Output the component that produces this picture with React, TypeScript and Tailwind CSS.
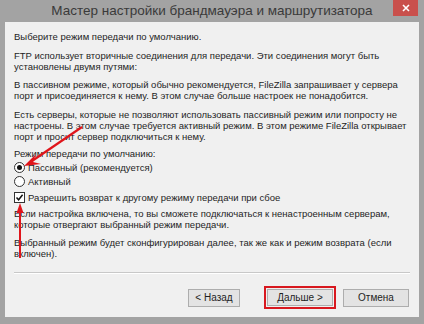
import React from 'react';

const font = { fontFamily: '"Liberation Sans", Arial, sans-serif' };

// абзац с ручными переносами строк, как в оригинале
function Para({ lines, className }: { lines: string[]; className?: string }) {
	return (
		<div className={className}>
			{lines.map((l, i) => (
				<div key={i} className="whitespace-nowrap h-[11px] leading-[11px]">{l}</div>
			))}
		</div>
	);
}

function Radio({ checked, label }: { checked?: boolean; label: string }) {
	return (
		<div className="flex items-center gap-[3px] h-[14px]">
			<span className="w-[11px] h-[11px] rounded-full border border-[#333] bg-white flex items-center justify-center">
				{checked && <span className="w-[5px] h-[5px] rounded-full bg-[#111]" />}
			</span>
			<span>{label}</span>
		</div>
	);
}

export default function App() {
	return (
		<div className="relative w-[424px] h-[324px] overflow-hidden bg-[#a3a3a3] text-[#1e1e1e]" style={font}>
			{/* заголовок */}
			<div className="relative h-[22px] flex items-center justify-center">
				<span className="text-[13.5px] text-[#3a3a3a]">Мастер настройки брандмауэра и маршрутизатора</span>
				<div className="absolute right-[6px] top-0 w-[25px] h-[16px] bg-[#c9504c] flex items-center justify-center">
					<svg width="8" height="8" viewBox="0 0 8 8">
						<path d="M1 1L7 7M7 1L1 7" stroke="#fff" strokeWidth="1.6" />
					</svg>
				</div>
			</div>
			{/* окно мастера */}
			<div className="mx-[5px] h-[295px] bg-[#f0f0f0] px-[9px] pt-[9px] text-[9.5px] leading-[11px] flex flex-col">
				<Para lines={['Выберите режим передачи по умолчанию.']} />
				<Para className="mt-[8px]" lines={['FTP использует вторичные соединения для передачи. Эти соединения могут быть', 'установлены двумя путями:']} />
				<Para className="mt-[7px]" lines={['В пассивном режиме, который обычно рекомендуется, FileZilla запрашивает у сервера', 'порт и присоединяется к нему. В этом случае больше настроек не понадобится.']} />
				<Para className="mt-[8px]" lines={['Есть серверы, которые не позволяют использовать пассивный режим или попросту не', 'настроены. В этом случае требуется активный режим. В этом режиме FileZilla открывает', 'порт и просит сервер подключиться к нему.']} />
				<Para className="mt-[6px]" lines={['Режим передачи по умолчанию:']} />
				<div className="mt-[1px] flex flex-col">
					<Radio checked label="Пассивный (рекомендуется)" />
					<Radio label="Активный" />
				</div>
				<div className="mt-[2px] flex items-center gap-[3px] h-[14px]">
					<span className="w-[11px] h-[11px] border border-[#333] bg-white flex items-center justify-center">
						<svg width="9" height="9" viewBox="0 0 9 9">
							<path d="M1.5 4.5L3.6 6.8L7.6 1.8" stroke="#111" strokeWidth="1.5" fill="none" />
						</svg>
					</span>
					<span>Разрешить возврат к другому режиму передачи при сбое</span>
				</div>
				<Para className="mt-[4px]" lines={['Если настройка включена, то вы сможете подключаться к ненастроенным серверам,', 'которые отвергают выбранный режим передачи.']} />
				<Para className="mt-[7px]" lines={['Выбранный режим будет сконфигурирован далее, так же как и режим возврата (если', 'включен).']} />
				<div className="mt-auto mb-[8px]">
					<div className="h-[2px] border-t border-[#c8c8c8] border-b border-b-white" />
					<div className="mt-[12px] flex justify-end items-center pr-[1px]">
						<button className="w-[52px] h-[18px] border border-[#adadad] bg-[#e3e3e3] text-[10px]">&lt; Назад</button>
						<div className="ml-[24px] border-2 border-[#d8181f] p-px">
							<button className="w-[66px] h-[17px] border border-[#adadad] bg-[#e3e3e3] text-[10px] block">Дальше &gt;</button>
						</div>
						<button className="ml-[7px] w-[66px] h-[18px] border border-[#adadad] bg-[#e3e3e3] text-[10px]">Отмена</button>
					</div>
				</div>
			</div>
			{/* стрелки */}
			<svg className="absolute left-0 top-0 pointer-events-none" width="424" height="324">
				<path d="M82 127L32 161" stroke="#e0151b" strokeWidth="2.2" />
				<path d="M24 166L36 154L33 162L41 164Z" fill="#e0151b" />
				<path d="M20 258L20 210" stroke="#e0151b" strokeWidth="2" />
				<path d="M20 203L16.5 213L23.5 213Z" fill="#e0151b" />
			</svg>
		</div>
	);
}
